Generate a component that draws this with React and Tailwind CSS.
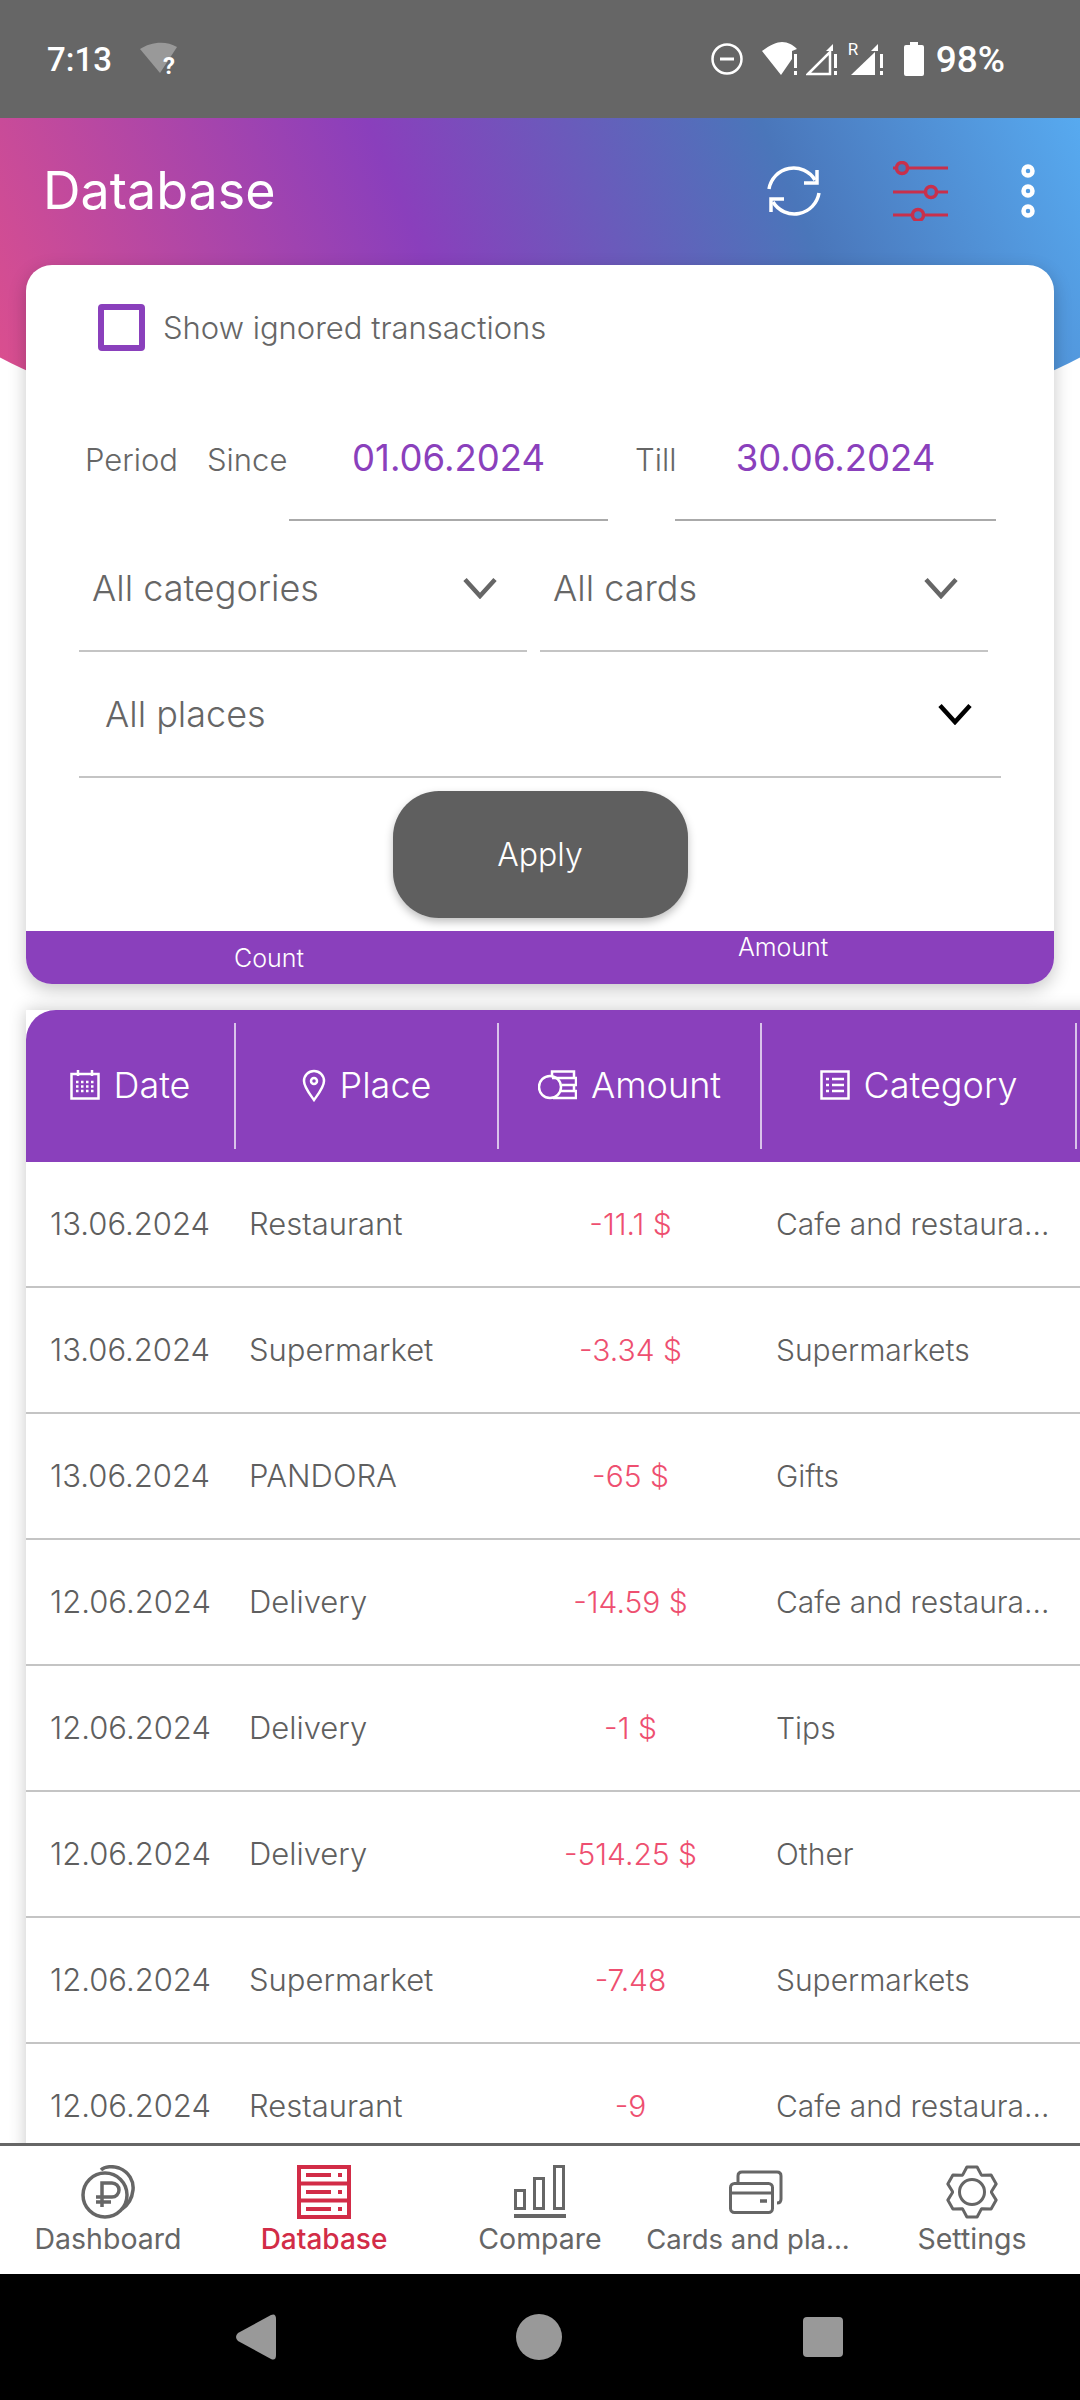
import React from 'react';

const rows = [
  ['13.06.2024', 'Restaurant', '-11.1 $', 'Cafe and restaura...'],
  ['13.06.2024', 'Supermarket', '-3.34 $', 'Supermarkets'],
  ['13.06.2024', 'PANDORA', '-65 $', 'Gifts'],
  ['12.06.2024', 'Delivery', '-14.59 $', 'Cafe and restaura...'],
  ['12.06.2024', 'Delivery', '-1 $', 'Tips'],
  ['12.06.2024', 'Delivery', '-514.25 $', 'Other'],
  ['12.06.2024', 'Supermarket', '-7.48', 'Supermarkets'],
  ['12.06.2024', 'Restaurant', '-9', 'Cafe and restaura...'],
];

// six toothed gear outline for the settings tab
const gearPath = () => {
  const c = 27;
  let d = '';
  for (let i = 0; i < 6; i++) {
    const a = (i * Math.PI) / 3 - Math.PI / 2;
    const pts = [
      [19.5, -0.5],
      [25.5, -0.2],
      [25.5, 0.2],
      [19.5, 0.5],
    ];
    pts.forEach(([r, o]) => {
      const x = c + r * Math.cos(a + o);
      const y = c + r * Math.sin(a + o);
      d += `${d ? 'L' : 'M'}${x.toFixed(1)} ${y.toFixed(1)} `;
    });
  }
  return d + 'Z';
};

const Chevron = ({ color = '#666666' }) => (
  <svg width="34" height="22" viewBox="0 0 34 22" fill="none">
    <path d="M2 2.5 L17 19 L32 2.5" stroke={color} strokeWidth="4.5" />
  </svg>
);

const Exclaim = ({ x }) => (
  <g fill="#fff">
    <rect x={x} y="12" width="3" height="14" />
    <rect x={x} y="29" width="3" height="4" />
  </g>
);

const StatusBar = () => (
  <div className="h-[118px] shrink-0 bg-[#666666] flex items-center pl-[47px] pr-[75px] font-[Roboto,sans-serif] text-white">
    <span className="text-[33px] font-medium leading-none">7:13</span>
    <svg className="ml-[28px]" width="44" height="48" viewBox="0 -6 44 48">
      <path d="M0 8 C10 1 26 -1 37 6 L20 32 Z" fill="#999999" />
      <text x="23" y="33" fontSize="24" fontWeight="700" fill="#fff" fontFamily="Roboto">?</text>
    </svg>
    <svg className="ml-auto" width="32" height="32" viewBox="0 0 32 32" fill="none" stroke="#fff" strokeWidth="2.5">
      <circle cx="16" cy="16" r="14.5" />
      <path d="M9 16 H23" strokeWidth="3" />
    </svg>
    <svg className="ml-[19px]" width="37" height="34" viewBox="0 0 37 34" fill="#fff">
      <path d="M0 9 C8 3 15 0 20 0 C26 0 31 3 35 7 L30 9 L30 17 L19 33 Z" />
      <Exclaim x="32" />
    </svg>
    <svg className="ml-[7px]" width="33" height="34" viewBox="0 0 33 34" fill="none">
      <path d="M2 32 L24 10 V32 Z M24 2" stroke="#fff" strokeWidth="2.5" />
      <path d="M20 9 L27 2 V9 Z" fill="#fff" />
      <Exclaim x="28" />
    </svg>
    <div className="relative ml-[11px] w-[36px] h-[34px]">
      <span className="absolute left-[-2px] top-[-1px] text-[17px] leading-none">R</span>
      <svg className="absolute left-0 top-0" width="36" height="34" viewBox="0 0 36 34" fill="#fff">
        <path d="M1 33 L25 10 V33 Z" />
        <path d="M21 9 L28 2 V9 Z" />
        <Exclaim x="30" />
      </svg>
    </div>
    <svg className="ml-[18px]" width="20" height="34" viewBox="0 0 20 34" fill="#fff">
      <path d="M6 0 H14 V3 H18 Q20 3 20 5 V32 Q20 34 18 34 H2 Q0 34 0 32 V5 Q0 3 2 3 H6 Z" />
    </svg>
    <span className="ml-[12px] text-[37px] font-medium leading-none">98%</span>
  </div>
);

const TopBar = () => (
  <div className="h-[360px] shrink-0 bg-[linear-gradient(67deg,#e2508a_0%,#8a3fbc_42%,#4a76ba_74%,#57aaf0_100%)] [clip-path:ellipse(733px_354px_at_50%_0)]">
    <div className="h-[147px] flex items-center pl-[43px] pb-[2px]">
      <span className="w-[230px] text-[52px] text-white leading-none">Database</span>
      <svg className="ml-[493px]" width="56" height="56" viewBox="0 0 56 56" fill="none" stroke="#fff" strokeWidth="3.5">
        <path d="M3 26 A25 25 0 0 1 49 17" />
        <path d="M51 7 V20 H38" />
        <path d="M53 30 A25 25 0 0 1 7 39" />
        <path d="M5 49 V36 H18" />
      </svg>
      <svg className="ml-[70px]" width="57" height="60" viewBox="0 0 57 60" fill="none" stroke="#c8304c">
        <path d="M1 7 H56 M1 31 H56 M1 54 H56" strokeWidth="3" />
        <circle cx="10" cy="7" r="5.5" strokeWidth="3.5" fill="#4a76ba" />
        <circle cx="39" cy="31" r="5.5" strokeWidth="3.5" fill="#4a80c8" />
        <circle cx="26" cy="54" r="5.5" strokeWidth="3.5" fill="#4a80c8" />
      </svg>
      <svg className="ml-[72px]" width="14" height="54" viewBox="0 0 14 54" fill="none" stroke="#fff" strokeWidth="4.5">
        <circle cx="7" cy="7" r="4.5" />
        <circle cx="7" cy="27" r="4.5" />
        <circle cx="7" cy="47" r="4.5" />
      </svg>
    </div>
  </div>
);

const DateField = ({ value, className }) => (
  <div className={`h-full border-b-2 border-[#aaaaaa] flex justify-center pt-[18px] text-[36.5px] leading-[42px] font-normal text-[#8a40bc] ${className}`}>
    {value}
  </div>
);

const FilterCard = () => (
  <div className="relative ml-[26px] w-[1028px] rounded-[26px] bg-white shadow-[0_6px_18px_rgba(0,0,0,0.22)] flex flex-col">
    <div className="flex items-center pl-[72px] pt-[39px]">
      <div className="w-[47px] h-[47px] border-[6px] border-[#8a40bc] rounded-[4px]" />
      <span className="ml-[18px] text-[31px] font-light text-[#666666] leading-none whitespace-nowrap">Show ignored transactions</span>
    </div>
    <div className="flex h-[170px] pt-[68px] text-[31px] font-light text-[#666666] leading-[42px]">
      <span className="ml-[59px] w-[122px] pt-[20px]">Period</span>
      <span className="w-[82px] pt-[20px]">Since</span>
      <DateField value="01.06.2024" className="w-[319px]" />
      <span className="ml-[27px] w-[40px] pt-[20px]">Till</span>
      <DateField value="30.06.2024" className="w-[321px]" />
    </div>
    <div className="flex h-[131px] ml-[53px] gap-[13px] text-[36px] font-light text-[#666666]">
      <div className="w-[448px] border-b-2 border-[#c4c4c4] flex items-center justify-between pl-[13px] pr-[30px] pt-[5px]">
        <span>All categories</span>
        <Chevron />
      </div>
      <div className="w-[448px] border-b-2 border-[#c4c4c4] flex items-center justify-between pl-[13px] pr-[30px] pt-[5px]">
        <span>All cards</span>
        <Chevron />
      </div>
    </div>
    <div className="flex items-center justify-between h-[126px] ml-[53px] w-[922px] border-b-2 border-[#c4c4c4] pl-[26px] pr-[29px] text-[36px] font-light text-[#666666]">
      <span>All places</span>
      <Chevron color="#000000" />
    </div>
    <button className="mt-[13px] mx-auto w-[295px] h-[127px] rounded-[46px] bg-[#5f5f5f] text-white text-[32px] font-light shadow-[0_4px_8px_rgba(0,0,0,0.25)]">
      Apply
    </button>
    <div className="mt-[13px] h-[53px] bg-[#8a40bc] rounded-b-[26px] flex text-white text-[25px] font-light leading-[30px]">
      <span className="ml-[208px] mt-[12px]">Count</span>
      <span className="ml-[434px] mt-[1px]">Amount</span>
    </div>
  </div>
);

const CalendarIcon = () => (
  <svg width="30" height="30" viewBox="0 0 30 30" fill="none" stroke="#fff" strokeWidth="2.5">
    <rect x="1.5" y="4" width="27" height="24.5" />
    <path d="M8 0 V6 M22 0 V6" />
    <path d="M6 12 H24 M6 16.5 H24 M6 21 H24" strokeWidth="2.5" strokeDasharray="2.5 2.5" />
  </svg>
);

const PinIcon = () => (
  <svg width="24" height="33" viewBox="0 0 24 33" fill="none" stroke="#fff" strokeWidth="2.5">
    <path d="M12 31 C7 24 2 18 2 12 A10 10 0 0 1 22 12 C22 18 17 24 12 31 Z" />
    <circle cx="12" cy="12" r="3" />
  </svg>
);

const CoinsIcon = () => (
  <svg width="39" height="30" viewBox="0 0 39 30" fill="none" stroke="#fff" strokeWidth="2.5">
    <circle cx="12" cy="17" r="11" />
    <path d="M14 6 V1.5 H36 V8 H14 M24 8 H38 V15 H24 M26 15 H36 V21 H26 M23 21 H38 V28 H15" />
  </svg>
);

const ListIcon = () => (
  <svg width="30" height="30" viewBox="0 0 30 30" fill="none" stroke="#fff" strokeWidth="2.5">
    <rect x="1.5" y="1.5" width="27" height="27" />
    <path d="M6 9 H9 M12 9 H24 M6 15 H9 M12 15 H24 M6 21 H9 M12 21 H24" />
  </svg>
);

const HeaderCell = ({ icon, label, last }) => (
  <div className={`flex items-center justify-center gap-[14px] my-[13px] pb-[2px] ${last ? '' : 'border-r-2 border-[#d9c3ea]'}`}>
    {icon}
    <span className="text-[36px] font-light leading-none">{label}</span>
  </div>
);

const TransactionTable = () => (
  <div className="mt-[26px] ml-[26px] w-[1120px] shadow-[0_0_16px_rgba(0,0,0,0.22)] bg-white">
    <div className="h-[152px] rounded-tl-[30px] bg-[#8a40bc] text-white grid grid-cols-[210px_263px_263px_315px_69px]">
      <HeaderCell icon={<CalendarIcon />} label="Date" />
      <HeaderCell icon={<PinIcon />} label="Place" />
      <HeaderCell icon={<CoinsIcon />} label="Amount" />
      <HeaderCell icon={<ListIcon />} label="Category" />
      <div />
    </div>
    {rows.map((row, i) => (
      <div key={i} className="h-[126px] border-b-2 border-[#c4c4c4] grid grid-cols-[210px_263px_263px_315px_69px] items-center text-[30px] font-light text-[#5f5f5f]">
        <span className="pl-[24px] text-[31px] whitespace-nowrap">{row[0]}</span>
        <span className="pl-[13px] text-[31px]">{row[1]}</span>
        <span className="text-center text-[#ee4f70]">{row[2]}</span>
        <span className="pl-[14px] whitespace-nowrap">{row[3]}</span>
      </div>
    ))}
  </div>
);

const NavIcon = ({ name }) => {
  if (name === 'dashboard') {
    return (
      <svg width="54" height="54" viewBox="0 0 54 54" fill="none" stroke="#666666" strokeWidth="3.5">
        <circle cx="24" cy="30" r="22" />
        <path d="M20 5 C24 1 32 1 38 3 C48 7 53 16 52 25 C51 34 47 40 41 44" />
        <path d="M21 42 V18 H31 A7 7 0 0 1 31 32 H15 M15 37 H30" />
      </svg>
    );
  }
  if (name === 'database') {
    return (
      <svg width="54" height="54" viewBox="0 0 54 54" fill="none" stroke="#d22c47" strokeWidth="4">
        <rect x="2" y="2" width="50" height="50" />
        <path d="M2 18.5 H52 M2 35.5 H52" />
        <path d="M9 10 H34 M9 27 H34 M9 44 H34" />
        <path d="M41 10 H45 M41 27 H45 M41 44 H45" />
      </svg>
    );
  }
  if (name === 'compare') {
    return (
      <svg width="52" height="54" viewBox="0 0 52 54" fill="none" stroke="#666666" strokeWidth="3">
        <rect x="1.5" y="25.5" width="9" height="18" />
        <rect x="20.5" y="13.5" width="9" height="30" />
        <rect x="40.5" y="1.5" width="9" height="42" />
        <path d="M0 51 H52" strokeWidth="4" />
      </svg>
    );
  }
  if (name === 'cards') {
    return (
      <svg width="54" height="44" viewBox="0 0 54 44" fill="none" stroke="#666666" strokeWidth="3">
        <rect x="1.5" y="13.5" width="42" height="29" rx="4" />
        <path d="M1.5 23 H43.5" strokeWidth="3" />
        <path d="M31 31 H38" strokeWidth="3.5" />
        <path d="M9 12 V6 Q9 2 13 2 H48 Q52 2 52 6 V29 Q52 33 48 33" />
      </svg>
    );
  }
  return (
    <svg width="54" height="54" viewBox="0 0 54 54" fill="none" stroke="#666666" strokeWidth="3" strokeLinejoin="round">
      <path d={gearPath()} />
      <circle cx="27" cy="27" r="12.5" />
    </svg>
  );
};

const tabs = [
  { name: 'dashboard', label: 'Dashboard' },
  { name: 'database', label: 'Database', active: true },
  { name: 'compare', label: 'Compare' },
  { name: 'cards', label: 'Cards and pla...' },
  { name: 'settings', label: 'Settings' },
];

const BottomNav = () => (
  <div className="h-[131px] shrink-0 bg-white border-t-[3px] border-[#666666] grid grid-cols-5">
    {tabs.map((tab) => (
      <div key={tab.name} className="flex flex-col items-center">
        <div className="h-[53px] mt-[19px] flex items-center justify-center">
          <NavIcon name={tab.name} />
        </div>
        <span className={`leading-[34px] mt-[4px] whitespace-nowrap ${tab.active ? 'text-[28px] font-medium text-[#d22c47]' : 'text-[#666666]'} ${tab.name === 'cards' ? 'text-[27.5px] mr-[16px]' : ''} ${!tab.active && tab.name !== 'cards' ? 'text-[28.5px]' : ''}`}>
          {tab.label}
        </span>
      </div>
    ))}
  </div>
);

const SystemNav = () => (
  <div className="h-[126px] shrink-0 bg-black flex items-center">
    <svg className="ml-[236px]" width="41" height="46" viewBox="0 0 41 46" fill="#999999">
      <path d="M2 19 L35 1 Q40 -1 40 5 V41 Q40 47 35 45 L2 27 Q-2 23 2 19 Z" />
    </svg>
    <div className="ml-[239px] w-[46px] h-[46px] rounded-full bg-[#999999]" />
    <div className="ml-[241px] w-[40px] h-[40px] rounded-[4px] bg-[#999999]" />
  </div>
);

export default function App() {
  return (
    <div className="w-[1080px] h-[2400px] bg-white flex flex-col overflow-hidden font-[Inter,sans-serif]">
      <StatusBar />
      <div className="flex-1 min-h-0 overflow-hidden">
        <TopBar />
        <div className="mt-[-213px]">
          <FilterCard />
          <TransactionTable />
        </div>
      </div>
      <BottomNav />
      <SystemNav />
    </div>
  );
}
